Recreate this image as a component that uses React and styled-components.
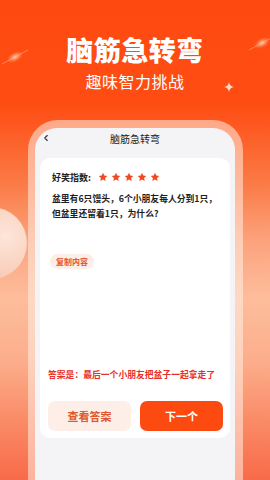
import React from "react";
import styled, { createGlobalStyle } from "styled-components";
import { ChevronLeft } from "lucide-react";

const GlobalStyle = createGlobalStyle`
  html, body {
    margin: 0;
    padding: 0;
  }
  body {
    font-family: "Noto Sans CJK SC", "Noto Sans", sans-serif;
  }
`;

const stars = [1, 2, 3, 4, 5];

const Star = () => (
  <svg width="10" height="10" viewBox="0 0 24 24">
    <path
      d="M12 1.8l3.1 6.6 7.1.9-5.2 4.9 1.3 7.1L12 17.8l-6.3 3.5 1.3-7.1L1.8 9.3l7.1-.9z"
      fill="#ef4a22"
    />
  </svg>
);

const Glow = () => (
  <svg width="30" height="20" viewBox="0 0 30 20">
    <defs>
      <radialGradient id="g" cx="50%" cy="50%" r="50%">
        <stop offset="0%" stopColor="#ffd9b8" stopOpacity="1" />
        <stop offset="100%" stopColor="#ff8a50" stopOpacity="0" />
      </radialGradient>
    </defs>
    <ellipse cx="15" cy="10" rx="9" ry="5" fill="url(#g)" transform="rotate(-28 15 10)" />
    <line x1="2" y1="17" x2="28" y2="3" stroke="#ffb68c" strokeWidth="0.8" opacity="0.7" />
  </svg>
);

const Twinkle = () => (
  <svg width="10" height="10" viewBox="0 0 10 10">
    <path d="M5 0 Q5.6 4.4 10 5 Q5.6 5.6 5 10 Q4.4 5.6 0 5 Q4.4 4.4 5 0z" fill="#ffe0cc" />
  </svg>
);

const App = () => {
  return (
    <>
      <GlobalStyle />
      <Page>
        <Bubble />
        <Spark style={{ left: 0, top: 47 }}>
          <Glow />
        </Spark>
        <Spark style={{ left: 247, top: 33 }}>
          <Glow />
        </Spark>
        <Spark style={{ left: 224, top: 82 }}>
          <Twinkle />
        </Spark>

        <Hero>
          <Title>脑筋急转弯</Title>
          <Subtitle>趣味智力挑战</Subtitle>
        </Hero>

        <Frame>
          <Screen>
            <NavBar>
              <BackBtn>
                <ChevronLeft size={10} strokeWidth={2.6} color="#333" />
              </BackBtn>
              <NavTitle>脑筋急转弯</NavTitle>
            </NavBar>

            <Card>
              <RatingRow>
                <Label>好笑指数:</Label>
                <Stars>
                  {stars.map((s) => (
                    <Star key={s} />
                  ))}
                </Stars>
              </RatingRow>
              <Question>
                盆里有6只馒头，6个小朋友每人分到1只，
                <br />
                但盆里还留着1只，为什么?
              </Question>
              <CopyPill>复制内容</CopyPill>

              <Answer>答案是：最后一个小朋友把盆子一起拿走了</Answer>
              <Buttons>
                <ActionButton $primary={false}>查看答案</ActionButton>
                <ActionButton $primary>下一个</ActionButton>
              </Buttons>
            </Card>
          </Screen>
        </Frame>
      </Page>
    </>
  );
};

export default App;

const Page = styled.div`
  position: relative;
  width: 270px;
  height: 480px;
  overflow: hidden;
  display: flex;
  flex-direction: column;
  background: linear-gradient(
    180deg,
    #fe4a10 0%,
    #fe4d14 22%,
    #fb7a45 38%,
    #fca27c 50%,
    #fdbd9c 62%,
    #fcae8c 75%,
    #fa8a66 88%,
    #f86b48 100%
  );
`;

const Bubble = styled.div`
  position: absolute;
  left: -45px;
  top: 207px;
  width: 72px;
  height: 72px;
  border-radius: 50%;
  background: radial-gradient(
    circle at 70% 40%,
    #fde6da 0%,
    #f9d2bf 50%,
    #f3b79c 100%
  );
`;

const Spark = styled.div`
  position: absolute;
  line-height: 0;
`;

const Hero = styled.div`
  display: flex;
  flex-direction: column;
  align-items: center;
  padding-top: 34px;
  height: 86px;
  color: #fff;
  position: relative;
`;

const Title = styled.div`
  font-size: 27px;
  font-weight: 900;
  line-height: 32px;
  letter-spacing: 0.5px;
`;

const Subtitle = styled.div`
  margin-top: 5px;
  font-size: 16px;
  line-height: 20px;
  letter-spacing: 0.5px;
`;

const Frame = styled.div`
  position: relative;
  flex: 1;
  margin: 0 27px 0 28px;
  padding: 8px 8px 0 7px;
  border-radius: 30px 30px 0 0;
  background: rgba(255, 238, 228, 0.55);
  display: flex;
`;

const Screen = styled.div`
  flex: 1;
  background: #f4f4f6;
  border-radius: 22px 22px 0 0;
  padding: 0 5px;
  display: flex;
  flex-direction: column;
`;

const NavBar = styled.div`
  position: relative;
  height: 20px;
  display: flex;
  align-items: center;
  justify-content: center;
`;

const BackBtn = styled.div`
  position: absolute;
  left: 1px;
  top: 5px;
  line-height: 0;
`;

const NavTitle = styled.div`
  font-size: 10px;
  color: #222;
`;

const Card = styled.div`
  margin-top: 10px;
  height: 280px;
  box-sizing: border-box;
  background: #fff;
  border-radius: 10px;
  padding: 12px 7px 7px 8px;
  display: flex;
  flex-direction: column;
`;

const RatingRow = styled.div`
  display: flex;
  align-items: center;
  height: 14px;
  padding-left: 4px;
`;

const Label = styled.div`
  font-size: 9px;
  font-weight: 700;
  color: #222;
  width: 46px;
`;

const Stars = styled.div`
  display: flex;
  gap: 3px;
  line-height: 0;
`;

const Question = styled.div`
  margin-top: 7px;
  padding-left: 4px;
  font-size: 8.8px;
  line-height: 15px;
  font-weight: 700;
  color: #1e1e1e;
  white-space: nowrap;
`;

const CopyPill = styled.div`
  align-self: flex-start;
  margin-top: 33px;
  margin-left: 2px;
  height: 15px;
  padding: 0 6px;
  border-radius: 8px;
  background: #fdeee7;
  color: #e4532a;
  font-size: 8px;
  font-weight: 700;
  line-height: 15px;
`;

const Answer = styled.div`
  margin-top: auto;
  font-size: 8.8px;
  line-height: 13px;
  font-weight: 700;
  color: #e8302a;
  white-space: nowrap;
`;

const Buttons = styled.div`
  margin-top: 20px;
  display: grid;
  grid-template-columns: 1fr 1fr;
  gap: 9px;
`;

const ActionButton = styled.div`
  height: 30px;
  border-radius: 7px;
  display: flex;
  align-items: center;
  justify-content: center;
  font-size: 11px;
  font-weight: 700;
  background: ${(p) => (p.$primary ? "#fd4a10" : "#fdeee7")};
  color: ${(p) => (p.$primary ? "#fff" : "#e0582e")};
`;
